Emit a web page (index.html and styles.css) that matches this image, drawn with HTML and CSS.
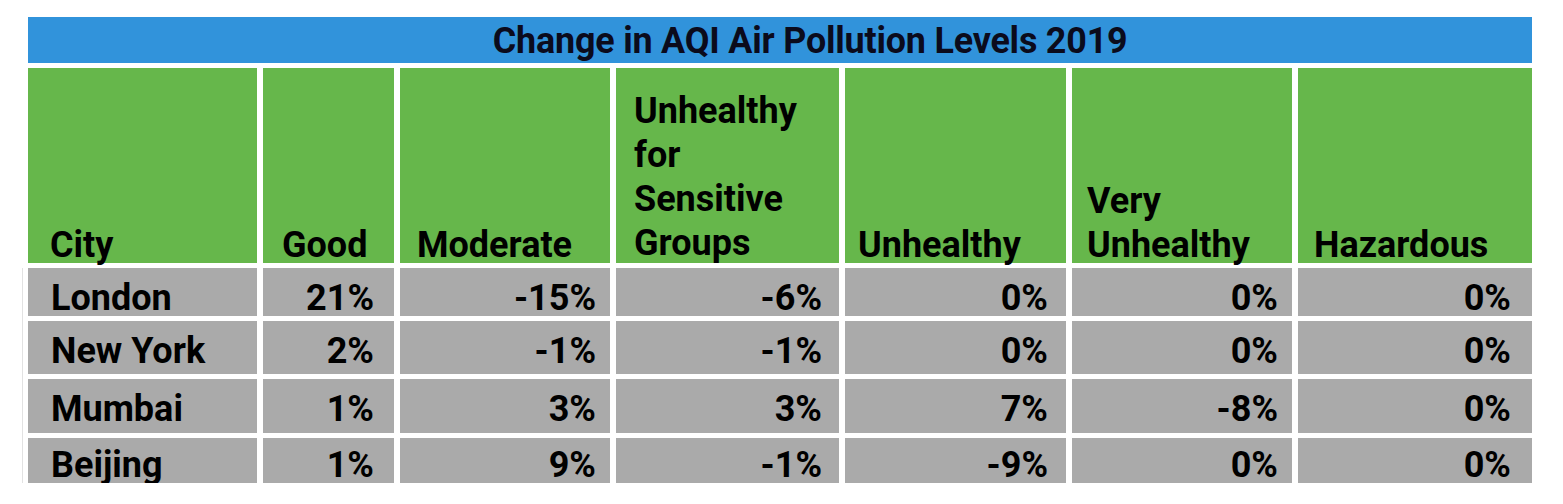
FILE: index.html
```html
<!DOCTYPE html>
<html>
<head>
<meta charset="utf-8">
<link rel="stylesheet" href="styles.css">
</head>
<body>
<div class="sheet">
  <div class="title"><span class="title-text">Change in AQI Air Pollution Levels 2019</span></div>
  <div class="grid head">
    <div class="hcell"><span>City</span></div>
    <div class="hcell"><span>Good</span></div>
    <div class="hcell"><span>Moderate</span></div>
    <div class="hcell"><span>Unhealthy<br>for<br>Sensitive<br>Groups</span></div>
    <div class="hcell"><span>Unhealthy</span></div>
    <div class="hcell"><span>Very<br>Unhealthy</span></div>
    <div class="hcell"><span>Hazardous</span></div>
  </div>
  <div class="body">
    <div class="grid row r1">
      <div class="cell city">London</div>
      <div class="cell num">21%</div>
      <div class="cell num">-15%</div>
      <div class="cell num">-6%</div>
      <div class="cell num">0%</div>
      <div class="cell num">0%</div>
      <div class="cell num">0%</div>
    </div>
    <div class="grid row r2">
      <div class="cell city">New York</div>
      <div class="cell num">2%</div>
      <div class="cell num">-1%</div>
      <div class="cell num">-1%</div>
      <div class="cell num">0%</div>
      <div class="cell num">0%</div>
      <div class="cell num">0%</div>
    </div>
    <div class="grid row r3">
      <div class="cell city">Mumbai</div>
      <div class="cell num">1%</div>
      <div class="cell num">3%</div>
      <div class="cell num">3%</div>
      <div class="cell num">7%</div>
      <div class="cell num">-8%</div>
      <div class="cell num">0%</div>
    </div>
    <div class="grid row r4">
      <div class="cell city">Beijing</div>
      <div class="cell num">1%</div>
      <div class="cell num">9%</div>
      <div class="cell num">-1%</div>
      <div class="cell num">-9%</div>
      <div class="cell num">0%</div>
      <div class="cell num">0%</div>
    </div>
  </div>
</div>
</body>
</html>
```

FILE: styles.css
```css
html, body {
  margin: 0;
  padding: 0;
  background: #ffffff;
}

body {
  font-family: Roboto, "Liberation Sans", sans-serif;
  color: #000;
}

.sheet {
  padding: 17px 0 0 28px;
  width: 1504px;
  display: flex;
  flex-direction: column;
  gap: 5px;
}

.title {
  height: 46px;
  background: #3193db;
  display: flex;
  justify-content: center;
  align-items: center;
  padding-left: 61px;
  font-family: Roboto, "Liberation Sans", sans-serif;
  font-weight: 700;
  font-size: 37px;
  color: #0b0b1c;
}

.title-text {
  display: inline-block;
  transform: scaleX(0.97);
  white-space: nowrap;
  letter-spacing: -0.2px;
}

.grid {
  display: grid;
  grid-template-columns: 229px 131px 210px 223px 221px 220px 234px;
  column-gap: 6px;
}

.head {
  height: 195px;
}

.hcell {
  background: #66b74b;
  display: flex;
  flex-direction: column;
  justify-content: flex-end;
  padding-left: 22px;
  font-weight: 700;
  font-size: 36px;
  line-height: 44px;
}

.hcell:nth-child(1) { padding-left: 22px; }
.hcell:nth-child(2) { padding-left: 19px; }
.hcell:nth-child(3) { padding-left: 17px; }
.hcell:nth-child(4) { padding-left: 18px; }
.hcell:nth-child(5) { padding-left: 13px; }
.hcell:nth-child(6) { padding-left: 15px; }
.hcell:nth-child(7) { padding-left: 16px; }

.hcell span {
  margin-bottom: -4px;
}

.hcell:nth-child(4) span {
  margin-bottom: -2px;
}

.body {
  display: flex;
  flex-direction: column;
  gap: 5px;
  margin-left: -6px;
  padding-left: 5px;
  border-left: 1px solid #e2e2e2;
}

.row {
  font-weight: 700;
  font-size: 36px;
  line-height: 36px;
}

.r1 { height: 48px; }
.r2 { height: 53px; }
.r3 { height: 54px; }
.r4 { height: 45px; }

.cell {
  background: #aaaaaa;
  padding-top: 12px;
  white-space: nowrap;
}

.r4 .cell {
  padding-top: 9px;
}

.city {
  padding-left: 23px;
}

.num {
  text-align: right;
}

.num:nth-child(2) { padding-right: 20px; }
.num:nth-child(3) { padding-right: 14px; }
.num:nth-child(4) { padding-right: 17px; }
.num:nth-child(5) { padding-right: 18px; }
.num:nth-child(6) { padding-right: 14px; }
.num:nth-child(7) { padding-right: 21px; }
```
